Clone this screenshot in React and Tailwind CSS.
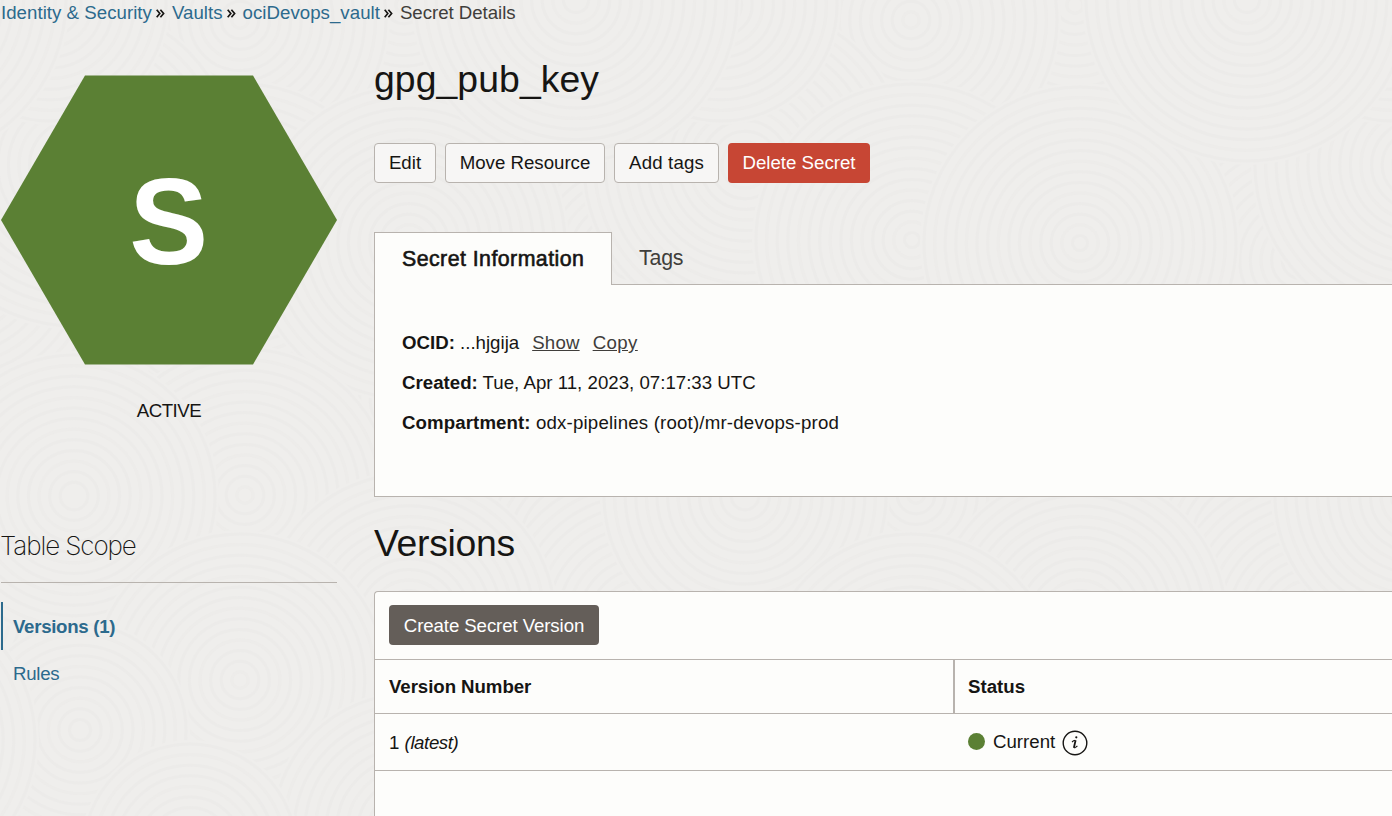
import React from "react";

// Paper texture: a repeating band of overlapping discs made of concentric rings.
const BAND = 671;
const DISCS = [
  [404, 5, 150], [240, 20, 150], [74, 400, 160], [409, 400, 170], [560, 330, 160], [630, 260, 150],
  [74, 165, 165], [241, 240, 160], [409, 243, 160], [50, 5, 120], [576, 0, 165],
  [582, 545, 130], [640, 620, 150], [245, 495, 150], [74, 496, 145], [409, 620, 150],
  [240, 680, 150], [80, 730, 110], [560, 740, 150], [409, 830, 140], [190, 850, 110],
];
const TILES = [-1, 0, 1, 2];

function Texture() {
  return (
    <svg className="absolute inset-0 h-full w-full" viewBox="0 0 1392 816" aria-hidden="true">
      {DISCS.map(([x, y, r], i) =>
        TILES.map((t) => (
          <g key={i + ":" + t} fill="none" stroke="#ebeae8" strokeWidth="3">
            <circle cx={x + t * BAND} cy={y} r={r} fill="#efeeec" stroke="none" />
            {Array.from({ length: Math.floor(r / 10.6) }, (_, k) => (
              <circle key={k} cx={x + t * BAND} cy={y} r={r - 4 - k * 10.6} strokeOpacity={k % 3 === 1 ? 0.5 : 0.8} />
            ))}
          </g>
        ))
      )}
    </svg>
  );
}

function Crumb({ children }) {
  return (
    <>
      <a className="text-[#2c6a8d]">{children}</a>
      <svg className="mt-px mr-[7px] ml-1 h-[9px] w-[9px] text-[#161513]" viewBox="0 0 9 9" fill="none" stroke="currentColor" strokeWidth="1.7">
        <path d="M0.7 0.8 3.8 4.5 0.7 8.2M4.4 0.8 7.6 4.5 4.4 8.2" />
      </svg>
    </>
  );
}

function Button({ className, children }) {
  return (
    <button className={"flex h-10 items-center justify-center rounded-[4px] whitespace-nowrap " + className}>
      {children}
    </button>
  );
}

const OUTLINE = "border border-[#b8b3ae] bg-[#f7f6f5]";

export default function App() {
  return (
    <div className="relative h-[816px] w-full overflow-hidden bg-[#efeeec] font-['Liberation_Sans',Arial,sans-serif] text-[18.67px] leading-6 text-[#161513]">
      <Texture />
      <div className="relative flex h-full flex-col">
        <nav className="flex h-[26px] items-center pl-px tracking-[0.03px] whitespace-nowrap">
          <Crumb>Identity &amp; Security</Crumb>
          <Crumb>Vaults</Crumb>
          <Crumb>ociDevops_vault</Crumb>
          <span className="tracking-[-0.03px] text-[#403e3b]">Secret Details</span>
        </nav>

        <div className="flex min-h-0 flex-1">
          <aside className="ml-px flex w-[336px] shrink-0 flex-col">
            <div className="mt-[49px] flex h-[290px] items-center justify-center bg-[#5b8034] pt-[3px] [clip-path:polygon(25%_0.2%,75%_0.2%,100%_50%,75%_99.8%,25%_99.8%,0_50%)]">
              <span className="scale-x-[0.97] text-[122px] leading-none font-bold text-white">S</span>
            </div>
            <div className="mt-[34px] text-center tracking-[-0.5px]">ACTIVE</div>
            <h2 className="-ml-px mt-[107px] pb-[20px] font-['Inter',sans-serif] text-[26px] leading-8 font-extralight tracking-[-1.1px]">
              Table Scope
            </h2>
            <hr className="border-[#b8b3ae]" />
            <ul className="mt-[19px]">
              <li className="flex h-12 items-center border-l-2 border-[#2c6a8d] pt-0.5 pl-[10px] font-bold tracking-[-0.3px] text-[#2c6a8d]">Versions (1)</li>
              <li className="flex h-12 items-center pl-3 tracking-[-0.25px] text-[#2c6a8d]">Rules</li>
            </ul>
          </aside>

          <main className="ml-[37px] flex min-w-0 flex-1 flex-col">
            <h1 className="mt-[29px] text-[37.33px] leading-[48px] tracking-[0.08px]">gpg_pub_key</h1>

            <div className="mt-10 flex gap-[9px]">
              <Button className={"w-[62px] " + OUTLINE}>Edit</Button>
              <Button className={"w-40 " + OUTLINE}>Move Resource</Button>
              <Button className={"w-[105px] tracking-[0.15px] " + OUTLINE}>Add tags</Button>
              <Button className="w-[142px] bg-[#c74634] text-white">Delete Secret</Button>
            </div>

            <div className="mt-[49px] flex h-[53px] shrink-0 text-[21.33px]">
              <div className="flex w-[238px] items-center border border-b-0 border-[#b8b3ae] bg-[#fdfdfb] pl-[27px] tracking-[0.45px] whitespace-nowrap [-webkit-text-stroke:0.6px]">
                Secret Information
              </div>
              <div className="flex flex-1 items-center border-b border-[#b8b3ae] pl-[27px] tracking-[-0.2px] text-[#403e3b]">Tags</div>
            </div>
            <section className="flex h-[212px] shrink-0 flex-col border-b border-l border-[#b8b3ae] bg-[#fdfdfb] pt-[38px] pl-[27px] leading-10">
              <div className="flex">
                <p><b>OCID:</b> ...hjgija</p>
                <a className="ml-[13px] tracking-[0.2px] text-[#403e3b] underline">Show</a>
                <a className="ml-[13px] tracking-[0.4px] text-[#403e3b] underline">Copy</a>
              </div>
              <p className="tracking-[0.01px]"><b>Created:</b> Tue, Apr 11, 2023, 07:17:33 UTC</p>
              <p><b className="tracking-[0.1px]">Compartment:</b> <span className="tracking-[0.19px]">odx-pipelines (root)/mr-devops-prod</span></p>
            </section>

            <h1 className="mt-[22px] text-[37.33px] leading-[48px] tracking-[-0.3px]">Versions</h1>
            <section className="mt-6 flex min-h-0 flex-1 flex-col rounded-tl-[4px] border-t border-l border-[#b8b3ae] bg-[#fdfdfb]">
              <div className="border-b border-[#b8b3ae] px-[14px] pt-[13px] pb-[14px]">
                <Button className="w-[210px] bg-[#645e59] pt-0.5 tracking-[-0.1px] text-white">Create Secret Version</Button>
              </div>
              <div className="flex h-[54px] shrink-0 border-b border-[#b8b3ae] font-bold">
                <div className="flex w-[580px] items-center border-r-2 border-[#b8b3ae] pl-[14px] tracking-[-0.06px]">Version Number</div>
                <div className="flex items-center pl-[13px]">Status</div>
              </div>
              <div className="flex h-[57px] shrink-0 items-center border-b border-[#b8b3ae]">
                <div className="w-[580px] pt-0.5 pl-[14px]">1 <i className="tracking-[-0.4px]">(latest)</i></div>
                <div className="flex items-center pl-[13px]">
                  <span className="mr-2 mb-0.5 h-[17px] w-[17px] rounded-full bg-[#5b8034]" />
                  Current
                  <svg className="mt-px ml-[7px] h-[26px] w-[26px]" viewBox="0 0 26 26" fill="none" stroke="currentColor">
                    <circle cx="13" cy="13" r="11.8" strokeWidth="1.4" />
                    <path d="M10 12c1.1-1 2-1.5 3.2-1.7M12 16.9c-.1 1 .5 1.2 1.5.5l1.9-1.4" strokeWidth="1.1" />
                    <path d="M13.6 10.2 11.9 17.6" strokeWidth="1.8" />
                    <circle cx="14.3" cy="7.3" r="1.1" fill="currentColor" stroke="none" />
                  </svg>
                </div>
              </div>
            </section>
          </main>
        </div>
      </div>
    </div>
  );
}
